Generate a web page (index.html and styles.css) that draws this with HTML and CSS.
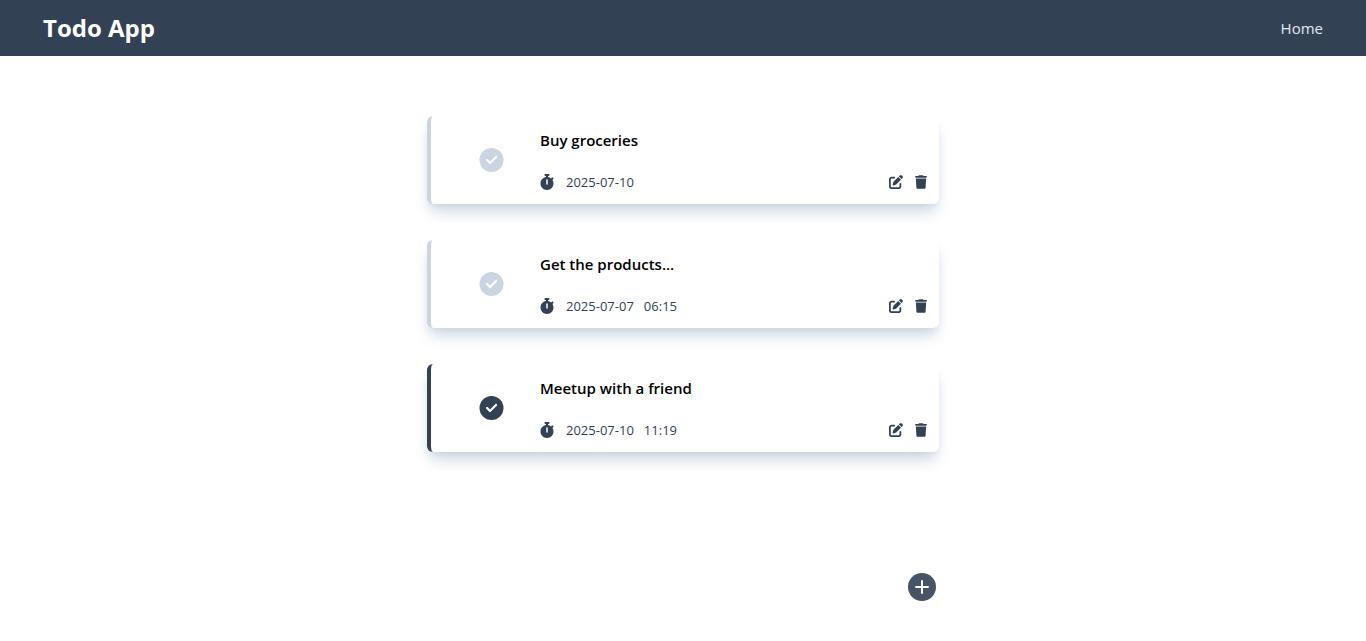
FILE: index.html
```html
<!DOCTYPE html>
<html lang="en">
<head>
<meta charset="utf-8">
<meta name="viewport" content="width=device-width, initial-scale=1">
<title>Todo App</title>
<link rel="stylesheet" href="styles.css">
</head>
<body>
<svg class="sprite" aria-hidden="true">
  <symbol id="check" viewBox="0 0 512 512"><path d="M256 512A256 256 0 1 0 256 0a256 256 0 1 0 0 512zM369 209L241 337c-9.400 9.400-24.600 9.400-33.900 0l-64-64c-9.400-9.400-9.400-24.600 0-33.900s24.600-9.400 33.900 0l47 47L335 175c9.400-9.400 24.600-9.400 33.900 0s9.400 24.600 0 33.900z"/></symbol>
  <symbol id="stopwatch" viewBox="0 0 448 512"><path d="M176 0c-17.700 0-32 14.300-32 32s14.300 32 32 32h16V98.400C92.300 113.800 16 200 16 304c0 114.900 93.100 208 208 208s208-93.100 208-208c0-41.800-12.300-80.700-33.500-113.200l24.100-24.100c12.500-12.500 12.500-32.800 0-45.300s-32.800-12.500-45.300 0L355.700 143c-28.100-23-62.200-38.800-99.700-44.600V64h16c17.700 0 32-14.300 32-32s-14.300-32-32-32H176zm72 192V320c0 13.300-10.700 24-24 24s-24-10.700-24-24V192c0-13.300 10.700-24 24-24s24 10.700 24 24z"/></symbol>
  <symbol id="edit" viewBox="0 0 512 512"><path d="M471.600 21.700c-21.900-21.900-57.300-21.900-79.200 0L362.300 51.700l97.900 97.900 30.100-30.100c21.900-21.900 21.900-57.300 0-79.200L471.600 21.700zm-299.200 220c-6.100 6.100-10.800 13.600-13.500 21.900l-29.600 88.800c-2.900 8.600-.6 18.100 5.800 24.600s15.900 8.700 24.600 5.800l88.800-29.600c8.200-2.700 15.700-7.400 21.900-13.500L437.700 172.300 339.700 74.300 172.400 241.700zM96 64C43 64 0 107 0 160V416c0 53 43 96 96 96H352c53 0 96-43 96-96V320c0-17.700-14.300-32-32-32s-32 14.300-32 32v96c0 17.700-14.300 32-32 32H96c-17.700 0-32-14.300-32-32V160c0-17.700 14.300-32 32-32h96c17.700 0 32-14.300 32-32s-14.300-32-32-32H96z"/></symbol>
  <symbol id="trash" viewBox="0 0 448 512"><path d="M135.200 17.700L128 32H32C14.300 32 0 46.300 0 64S14.300 96 32 96H416c17.700 0 32-14.300 32-32s-14.300-32-32-32H320l-7.200-14.300C307.400 6.800 296.300 0 284.200 0H163.800c-12.100 0-23.200 6.800-28.600 17.700zM416 128H32L53.200 467c1.600 25.300 22.600 45 47.900 45H346.900c25.300 0 46.300-19.700 47.900-45L416 128z"/></symbol>
  <symbol id="plus" viewBox="0 0 14 14"><path d="M7 1v12M1 7h12" fill="none" stroke="currentColor" stroke-width="2" stroke-linecap="round"/></symbol>
</svg>
<header class="navbar">
  <h1 class="brand">Todo App</h1>
  <nav><a class="nav-link" href="#">Home</a></nav>
</header>
<main class="page">
  <ul class="todos">
    <li class="todo">
      <button class="toggle" type="button" aria-label="Mark done"><svg class="icon-check"><use href="#check"/></svg></button>
      <div class="details">
        <h2 class="title">Buy groceries</h2>
        <div class="meta">
          <svg class="icon-watch"><use href="#stopwatch"/></svg>
          <div class="due"><time>2025-07-10</time></div>
          <div class="actions">
            <button type="button" aria-label="Edit"><svg class="icon-edit"><use href="#edit"/></svg></button>
            <button type="button" aria-label="Delete"><svg class="icon-trash"><use href="#trash"/></svg></button>
          </div>
        </div>
      </div>
    </li>
    <li class="todo">
      <button class="toggle" type="button" aria-label="Mark done"><svg class="icon-check"><use href="#check"/></svg></button>
      <div class="details">
        <h2 class="title">Get the products...</h2>
        <div class="meta">
          <svg class="icon-watch"><use href="#stopwatch"/></svg>
          <div class="due"><time>2025-07-07</time><time>06:15</time></div>
          <div class="actions">
            <button type="button" aria-label="Edit"><svg class="icon-edit"><use href="#edit"/></svg></button>
            <button type="button" aria-label="Delete"><svg class="icon-trash"><use href="#trash"/></svg></button>
          </div>
        </div>
      </div>
    </li>
    <li class="todo done">
      <button class="toggle" type="button" aria-label="Mark not done"><svg class="icon-check"><use href="#check"/></svg></button>
      <div class="details">
        <h2 class="title">Meetup with a friend</h2>
        <div class="meta">
          <svg class="icon-watch"><use href="#stopwatch"/></svg>
          <div class="due"><time>2025-07-10</time><time>11:19</time></div>
          <div class="actions">
            <button type="button" aria-label="Edit"><svg class="icon-edit"><use href="#edit"/></svg></button>
            <button type="button" aria-label="Delete"><svg class="icon-trash"><use href="#trash"/></svg></button>
          </div>
        </div>
      </div>
    </li>
  </ul>
  <div class="footer">
    <button class="add" type="button" aria-label="Add todo"><svg class="icon-plus"><use href="#plus"/></svg></button>
  </div>
</main>
</body>
</html>
```

FILE: styles.css
```css
* {
  box-sizing: border-box;
  margin: 0;
  padding: 0;
}

body {
  background: #fff;
  color: #000;
  font-family: "Segoe UI", "Open Sans", "Noto Sans", sans-serif;
  font-size: 16px;
  line-height: 24px;
}

button {
  border: 0;
  background: none;
  color: inherit;
  cursor: pointer;
}

svg {
  display: block;
  fill: currentColor;
}

.sprite {
  display: none;
}

.navbar {
  display: flex;
  align-items: center;
  justify-content: space-between;
  padding: 12px 43px;
  background: #334155;
}

.brand {
  color: #fff;
  font-size: 24px;
  font-weight: 700;
  line-height: 32px;
}

.nav-link {
  color: #e2e8f0;
  font-size: 15px;
  text-decoration: none;
}

.page {
  max-width: 512px;
  margin: 0 auto;
  padding: 60px 0 40px;
}

.todos {
  display: flex;
  flex-direction: column;
  gap: 36px;
  list-style: none;
}

.todo {
  display: flex;
  align-items: center;
  padding: 12px 12px 12px 0;
  border-left: 4px solid #cbd5e1;
  border-radius: 6px;
  background: #fff;
  box-shadow: 0 10px 15px -3px #cbd5e1, 0 4px 6px -4px #cbd5e1;
}

.toggle {
  padding: 0 36px 0 48px;
  color: #cbd5e1;
}

.todo.done {
  border-left-color: #334155;
}

.done .toggle {
  color: #334155;
}

.details {
  display: flex;
  flex: 1;
  flex-direction: column;
  gap: 20px;
}

.title {
  font-size: 15px;
  font-weight: 600;
  line-height: 24px;
}

.meta {
  display: flex;
  align-items: center;
  gap: 12px;
  color: #334155;
  font-size: 13px;
  line-height: 20px;
}

.due {
  display: flex;
  gap: 10px;
}

.actions {
  display: flex;
  align-items: center;
  gap: 12px;
  margin-left: auto;
}

.icon-check {
  width: 25px;
  height: 24px;
}

.icon-watch {
  width: 14px;
  height: 16px;
}

.icon-edit {
  width: 14px;
  height: 14px;
}

.icon-trash {
  width: 12px;
  height: 14px;
}

.icon-plus {
  width: 14px;
  height: 14px;
}

.footer {
  display: flex;
  justify-content: flex-end;
  padding: 121px 3px 0;
}

.add {
  display: grid;
  place-items: center;
  width: 28px;
  height: 28px;
  border-radius: 50%;
  background: #475366;
  color: #fff;
}
```
